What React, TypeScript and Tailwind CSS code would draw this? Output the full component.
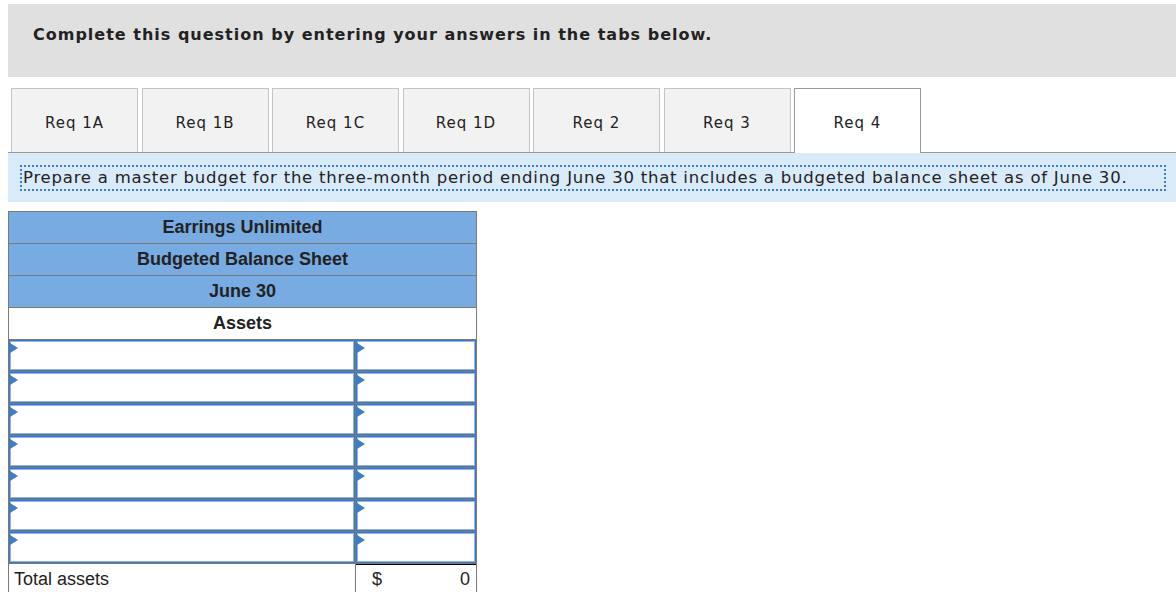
import React from 'react';

const tabs = ['Req 1A', 'Req 1B', 'Req 1C', 'Req 1D', 'Req 2', 'Req 3', 'Req 4'];

const verdana = { fontFamily: '"DejaVu Sans", Verdana, sans-serif' };

const Marker = () => (
  <span className="absolute left-0 top-[2px] w-0 h-0 border-y-[5px] border-y-transparent border-l-[8px] border-l-[#3d7cc9]" />
);

const InputRow = () => (
  <div className="flex h-[32px] border-b border-[#7a7a7a]">
    <div className="relative w-[346px] h-full border border-[#3d77c2] bg-white shadow-[inset_0_0_0_1px_#8db5e5]">
      <Marker />
    </div>
    <div className="w-[1px] bg-[#7a7a7a]" />
    <div className="relative w-[120px] h-full border border-[#3d77c2] bg-white shadow-[inset_0_0_0_1px_#8db5e5]">
      <Marker />
    </div>
  </div>
);

const App = () => {
  const activeTab = 'Req 4';

  return (
    <div className="w-[1176px] h-[592px] overflow-hidden bg-white text-[#222]">
      <div className="ml-[8px] mt-[4px] h-[73px] bg-[#e0e0e0] pl-[25px] pt-[19px]">
        <h2 className="text-[16px] font-bold tracking-[1px]" style={verdana}>
          Complete this question by entering your answers in the tabs below.
        </h2>
      </div>

      <div className="ml-[8px] mt-[11px] flex items-end border-b border-[#9a9a9a] pl-[3px] gap-[3.5px] h-[65px]">
        {tabs.map(tab =>
          tab === activeTab ? (
            <div
              key={tab}
              className="w-[127px] h-[65px] -mb-[1px] bg-white border border-b-0 border-[#9a9a9a] flex items-center justify-center pt-[4px] text-[15px] tracking-[1px]"
              style={verdana}
            >
              {tab}
            </div>
          ) : (
            <div
              key={tab}
              className="w-[127px] h-[64px] bg-[#f2f2f2] border border-b-0 border-[#c4c4c4] flex items-center justify-center pt-[5px] text-[15px] tracking-[1px]"
              style={verdana}
            >
              {tab}
            </div>
          )
        )}
      </div>

      <div className="ml-[8px] h-[49px] bg-[#d9ebf9] pl-[12px] pr-[10px] pt-[12px]">
        <div
          className="h-[26px] border-2 border-dotted border-[#3d7cc9] pl-[1px] text-[16.5px] leading-[22px] tracking-[0.77px] whitespace-nowrap"
          style={verdana}
        >
          Prepare a master budget for the three-month period ending June 30 that includes a budgeted balance sheet as of June 30.
        </div>
      </div>

      <div
        className="ml-[8px] mt-[9px] w-[469px] border-x border-t border-[#7a7a7a] text-[18px]"
        style={{ fontFamily: '"Liberation Sans", Arial, sans-serif' }}
      >
        {['Earrings Unlimited', 'Budgeted Balance Sheet', 'June 30'].map(t => (
          <div key={t} className="h-[32px] bg-[#78abe2] border-b border-[#7a7a7a] flex items-center justify-center font-bold">
            {t}
          </div>
        ))}
        <div className="h-[32px] bg-white border-b border-[#7a7a7a] flex items-center justify-center font-bold">
          Assets
        </div>
        {Array.from({ length: 7 }).map((_, i) => (
          <InputRow key={i} />
        ))}
        <div className="flex h-[30px]">
          <div className="w-[346px] pl-[5px] flex items-center">Total assets</div>
          <div className="w-[1px] bg-[#7a7a7a]" />
          <div className="w-[120px] border-t border-black flex items-center justify-between pl-[16px] pr-[6px]">
            <span>$</span>
            <span>0</span>
          </div>
        </div>
      </div>
    </div>
  );
};

export default App;
